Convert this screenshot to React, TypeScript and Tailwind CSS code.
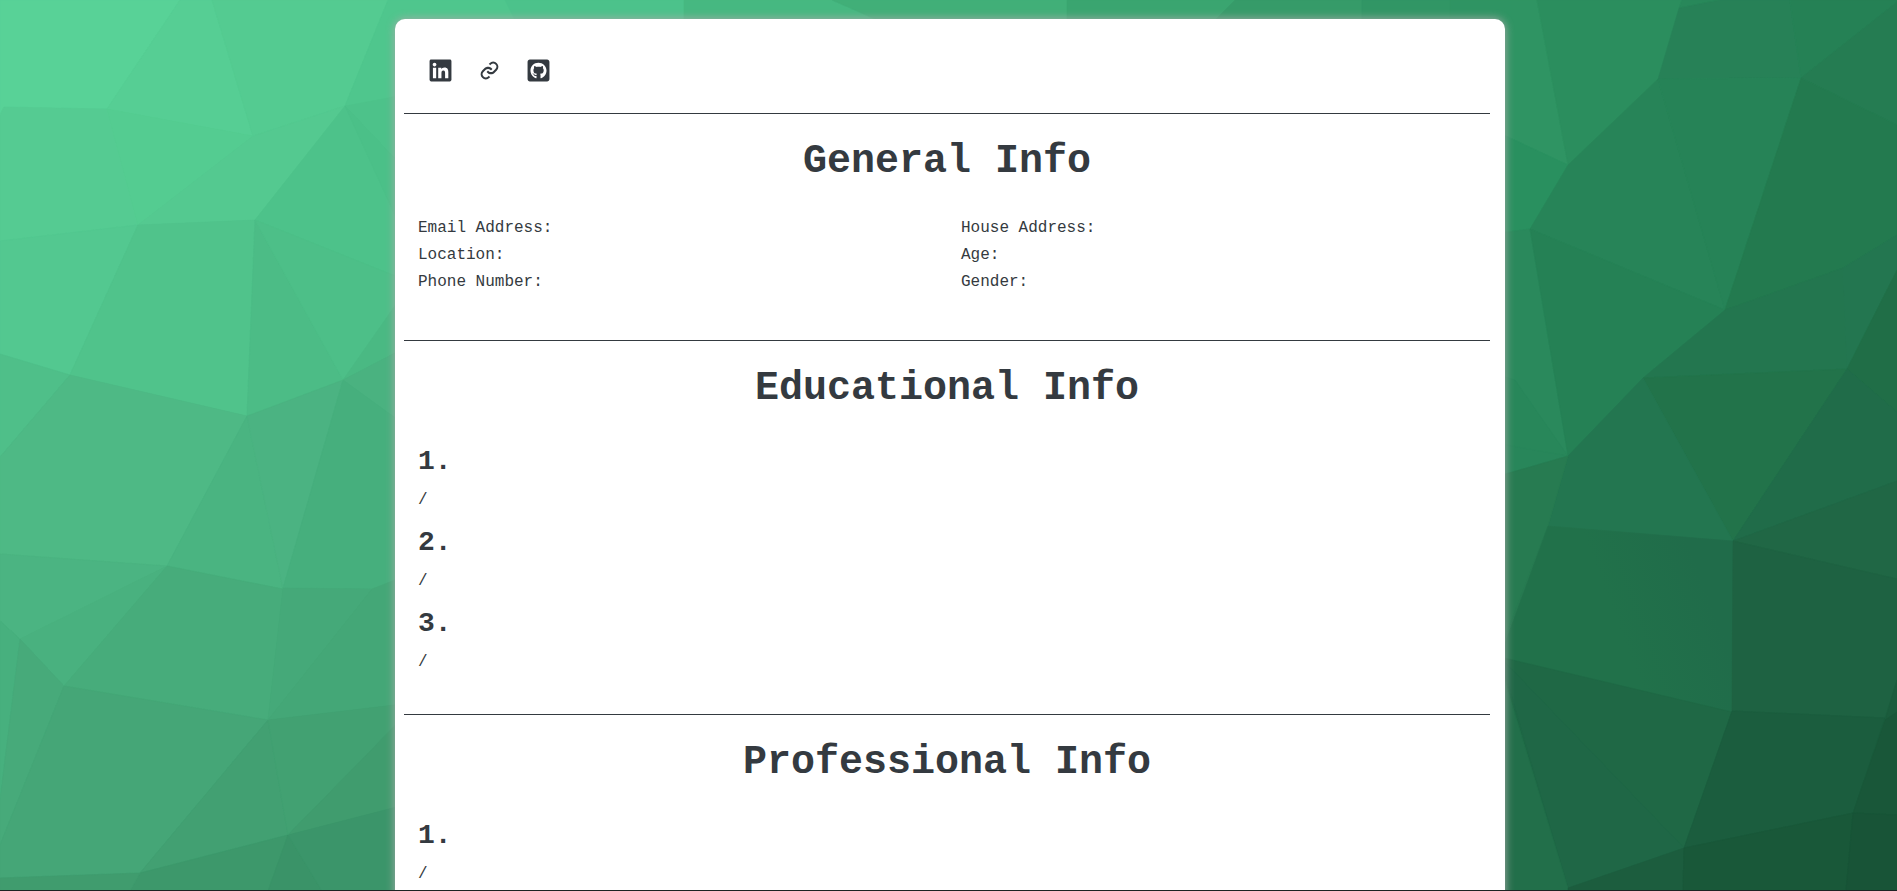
import { FaLinkedin, FaGithubSquare } from "react-icons/fa";
import { BiLink } from "react-icons/bi";

type Facet = [points: string, fill: string];

const facets: Facet[] = [
  // left side
  ["0,0 180,0 107,109 4,107 0,115", "#58d297"],
  ["180,0 212,0 253,136 107,109", "#56ce94"],
  ["212,0 388,0 345,106 253,136", "#54cb91"],
  ["388,0 520,0 520,90 345,106", "#4fc68d"],
  ["0,115 4,107 107,109 138,225 0,241", "#55cb92"],
  ["107,109 253,136 138,225", "#54cc91"],
  ["253,136 345,106 255,220 138,225", "#54c990"],
  ["345,106 420,212 420,286 255,220", "#4dc28a"],
  ["345,106 420,92 420,185", "#4dc28a"],
  ["345,106 420,185 420,270", "#4bc088"],
  ["0,241 138,225 70,375 0,354", "#53c890"],
  ["138,225 255,220 247,416 70,375", "#50c38b"],
  ["255,220 343,380 247,416", "#4cbc86"],
  ["255,220 420,286 343,380", "#4dbf88"],
  ["343,380 420,270 420,340", "#4ab983"],
  ["0,354 70,375 0,457", "#4fbf89"],
  ["70,375 247,416 167,566 0,554 0,457", "#4eb985"],
  ["247,416 283,589 167,566", "#4ab481"],
  ["247,416 343,380 283,589", "#4bb382"],
  ["343,380 420,340 420,436", "#4ab280"],
  ["343,380 420,436 420,572 372,589 283,588", "#46af7d"],
  ["0,554 167,566 20,639 0,621", "#4bb482"],
  ["167,566 64,686 20,639", "#49b17f"],
  ["0,621 20,639 0,800", "#47b07e"],
  ["20,639 64,686 0,845 0,800", "#47aa7a"],
  ["167,566 283,589 268,720 64,686", "#47ac7b"],
  ["283,588 372,589 268,720", "#45a979"],
  ["372,589 420,570 420,702 268,720", "#44a777"],
  ["64,686 268,720 140,873 0,878 0,845", "#45a677"],
  ["268,720 288,835 140,873", "#42a072"],
  ["268,720 420,702 288,835", "#42a172"],
  ["288,835 420,700 420,801", "#409c6e"],
  ["140,873 288,835 268,891 130,891", "#3d986b"],
  ["288,835 268,891 322,891", "#3a9368"],
  ["288,835 420,801 420,891 322,891", "#3b956a"],
  ["0,878 140,873 130,891 0,891", "#409c6e"],
  // strip above the card
  ["505,0 520,30 684,30 684,0", "#4cc28b"],
  ["684,0 684,30 900,30 832,0", "#46b881"],
  ["832,0 900,30 1067,30 1067,0", "#41af78"],
  ["1067,0 1067,30 1205,30 1235,0", "#3aa570"],
  ["1235,0 1205,30 1362,30 1362,0", "#369b69"],
  ["1362,0 1362,30 1505,30 1537,0", "#319665"],
  // right side
  ["1450,0 1537,0 1568,165 1450,110", "#2f9463"],
  ["1450,110 1568,165 1530,229 1450,240", "#29905f"],
  ["1537,0 1682,0 1679,8 1658,79 1568,165", "#2b8e5e"],
  ["1682,0 1720,0 1679,8", "#28885a"],
  ["1720,0 1790,0 1801,78 1658,79 1679,8", "#278157"],
  ["1790,0 1897,0 1897,2 1801,78", "#258155"],
  ["1897,2 1897,125 1801,78", "#257c52"],
  ["1568,165 1658,79 1725,310 1530,229", "#278458"],
  ["1658,79 1801,78 1725,310", "#268357"],
  ["1801,78 1897,125 1897,235 1843,268 1725,310", "#237a4f"],
  ["1450,240 1530,229 1568,456 1450,440", "#2a895c"],
  ["1450,360 1515,380 1568,456 1450,440", "#28875a"],
  ["1530,229 1725,310 1643,378 1568,456", "#258155"],
  ["1725,310 1843,268 1847,369 1643,378", "#23764f"],
  ["1843,268 1897,235 1897,270 1847,369", "#237650"],
  ["1643,378 1847,369 1733,541", "#22734a"],
  ["1643,378 1733,541 1548,526 1568,456", "#237650"],
  ["1847,369 1897,270 1897,412", "#206e47"],
  ["1847,369 1897,412 1897,481 1733,541", "#206c49"],
  ["1733,541 1897,481 1897,579", "#206745"],
  ["1450,435 1568,456 1450,490", "#28865a"],
  ["1450,490 1568,456 1548,526 1500,650 1450,650", "#277b51"],
  ["1548,526 1733,541 1732,712 1500,657", "url(#facetFade)"],
  ["1733,541 1897,579 1897,680 1885,718 1732,711", "#1e6242"],
  ["1500,657 1732,712 1684,848 1568,888 1500,665", "#1f6845"],
  ["1500,657 1684,848 1568,888", "#1f6746"],
  ["1500,665 1568,888 1568,891 1450,891", "#226f4a"],
  ["1732,711 1885,718 1853,813 1684,848", "#1b5d3e"],
  ["1897,680 1897,715 1885,720", "#1b5c3d"],
  ["1885,720 1897,712 1897,815 1853,813", "#195739"],
  ["1684,848 1683,891 1568,891 1568,888", "#1c5d3e"],
  ["1684,848 1853,813 1846,891 1683,891", "#195839"],
  ["1853,813 1897,815 1897,891 1846,891", "#185437"],
];

function Backdrop() {
  return (
    <svg
      aria-hidden="true"
      className="absolute inset-0 h-full w-full"
      viewBox="0 0 1897 891"
      preserveAspectRatio="none"
    >
      <defs>
        <linearGradient id="base" x1="0" y1="0" x2="1" y2="1">
          <stop offset="0" stopColor="#58d297" />
          <stop offset="0.5" stopColor="#379b69" />
          <stop offset="1" stopColor="#185437" />
        </linearGradient>
        <linearGradient id="facetFade" x1="0" y1="0.3" x2="1" y2="0">
          <stop offset="0.4" stopColor="#21714a" />
          <stop offset="0.8" stopColor="#206c4a" />
        </linearGradient>
      </defs>
      <rect width="1897" height="891" fill="url(#base)" />
      {facets.map(([points, fill]) => (
        <polygon key={points} points={points} fill={fill} stroke={fill} strokeWidth="0.6" />
      ))}
    </svg>
  );
}

const generalInfo = [
  ["Email Address:", "Location:", "Phone Number:"],
  ["House Address:", "Age:", "Gender:"],
];

function SectionTitle({ children }: { children: string }) {
  return <h1 className="text-center text-[40px] leading-[48px] font-bold">{children}</h1>;
}

function Entries({ count }: { count: number }) {
  return (
    <ol className="mt-8 flex flex-col gap-3 px-[14px]">
      {Array.from({ length: count }, (_, i) => (
        <li key={i} className="flex flex-col gap-2">
          <h3 className="text-[28px] leading-[34px] font-bold">{i + 1}.</h3>
          <p>/</p>
        </li>
      ))}
    </ol>
  );
}

export default function App() {
  return (
    <div className="relative flex h-screen flex-col overflow-hidden font-['Liberation_Mono','Courier_New',monospace] text-base leading-[27px] text-[#343a40]">
      <Backdrop />
      <main className="relative flex-1 overflow-y-auto pt-[19px] pl-[3px] [scrollbar-width:none]">
        <article className="mx-auto w-full max-w-[1110px] rounded-[10px] bg-white pr-[15px] pl-[9px] shadow-[0_0_10px_#aaaaaa]">
          <nav className="flex gap-6 px-6 pt-[39px] pb-[30px] text-[25px]">
            <a href="#linkedin" aria-label="LinkedIn">
              <FaLinkedin />
            </a>
            <a href="#website" aria-label="Website">
              <BiLink />
            </a>
            <a href="#github" aria-label="GitHub">
              <FaGithubSquare />
            </a>
          </nav>

          <section className="border-t border-[#343a40] pt-6 pb-11">
            <SectionTitle>General Info</SectionTitle>
            <div className="mt-[29px] grid grid-cols-2">
              {generalInfo.map((column) => (
                <ul key={column[0]} className="px-[14px]">
                  {column.map((label) => (
                    <li key={label}>{label}</li>
                  ))}
                </ul>
              ))}
            </div>
          </section>

          <section className="border-t border-[#343a40] pt-6 pb-[38px]">
            <SectionTitle>Educational Info</SectionTitle>
            <Entries count={3} />
          </section>

          <section className="border-t border-[#343a40] pt-6 pb-[38px]">
            <SectionTitle>Professional Info</SectionTitle>
            <Entries count={1} />
          </section>
        </article>
      </main>
      <div className="relative h-px bg-[#1b2323]" />
    </div>
  );
}
